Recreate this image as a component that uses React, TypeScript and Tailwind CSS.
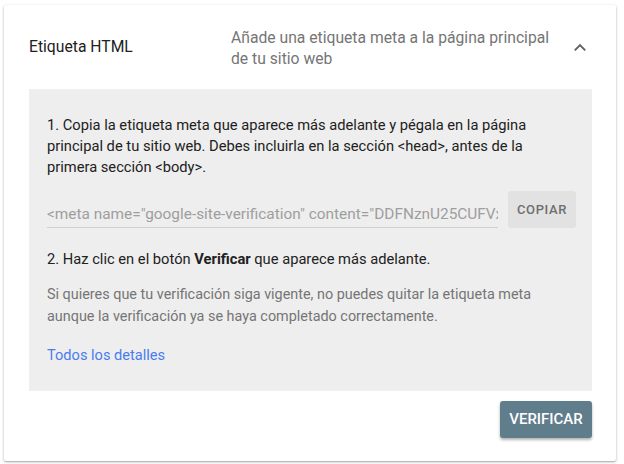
import React from "react";

export default function App() {
  return (
    <div className="w-[624px] h-[464px] bg-white pt-[5px] pl-[4px]" style={{ fontFamily: "Roboto, 'Liberation Sans', sans-serif" }}>
      <div className="w-[612px] h-[456px] bg-white rounded-[2px] shadow-[0_1px_3px_rgba(0,0,0,0.28),0_1px_1px_rgba(0,0,0,0.12)] pl-[25px] pr-[24px] flex flex-col">
        <div className="h-[84px] flex items-center">
          <div className="w-[202px] text-[15.7px] text-[#212121] leading-[22px] pb-[1px]">Etiqueta HTML</div>
          <div className="w-[330px] text-[15.7px] text-[#757575] leading-[21px] pt-[1px]">
            Añade una etiqueta meta a la página principal de tu sitio web
          </div>
          <div className="flex-1 flex justify-end pr-[5px]">
            <svg width="14" height="9" viewBox="0 0 14 9" className="mt-[1px]">
              <path d="M1.8 7.3 L7 2.1 L12.2 7.3" fill="none" stroke="#616161" strokeWidth="1.9" />
            </svg>
          </div>
        </div>
        <div className="bg-[#eeeeee] pl-[18px] pr-[16px] pt-[26px] pb-[25px] text-[14.7px]">
          <p className="leading-[21px] text-[#212121] pr-[10px]">
            1. Copia la etiqueta meta que aparece más adelante y pégala en la página principal de tu sitio web. Debes incluirla en la sección &lt;head&gt;, antes de la primera sección &lt;body&gt;.
          </p>
          <div className="flex items-end gap-[10px] mt-[13px]">
            <div className="w-[451px] h-[30px] border-b border-[#cfcfcf] overflow-hidden whitespace-nowrap text-[15.4px] text-[#9e9e9e] leading-[30px] pt-[1px]">
              &lt;meta name="google-site-verification" content="DDFNznU25CUFVx1bTq8hW3kLm9pQ2rS7tY4vZ0aB6cE" /&gt;
            </div>
            <button className="w-[68px] h-[37px] shrink-0 bg-[#e2e2e2] rounded-[3px] text-[13px] font-medium tracking-[0.6px] text-[#6e6e6e]">
              COPIAR
            </button>
          </div>
          <p className="leading-[21px] text-[#212121] mt-[21px]">
            2. Haz clic en el botón <span className="font-bold">Verificar</span> que aparece más adelante.
          </p>
          <p className="leading-[22px] text-[14.4px] text-[#757575] mt-[14px] pr-[40px]">
            Si quieres que tu verificación siga vigente, no puedes quitar la etiqueta meta aunque la verificación ya se haya completado correctamente.
          </p>
          <p className="leading-[21px] text-[14.6px] text-[#4a7cf0] mt-[17px]">Todos los detalles</p>
        </div>
        <div className="flex justify-end mt-[10px]">
          <button className="w-[92px] h-[37px] bg-[#607d8b] rounded-[3px] text-white text-[15px] font-medium shadow-[0_2px_3px_rgba(0,0,0,0.3)]">
            VERIFICAR
          </button>
        </div>
      </div>
    </div>
  );
}
